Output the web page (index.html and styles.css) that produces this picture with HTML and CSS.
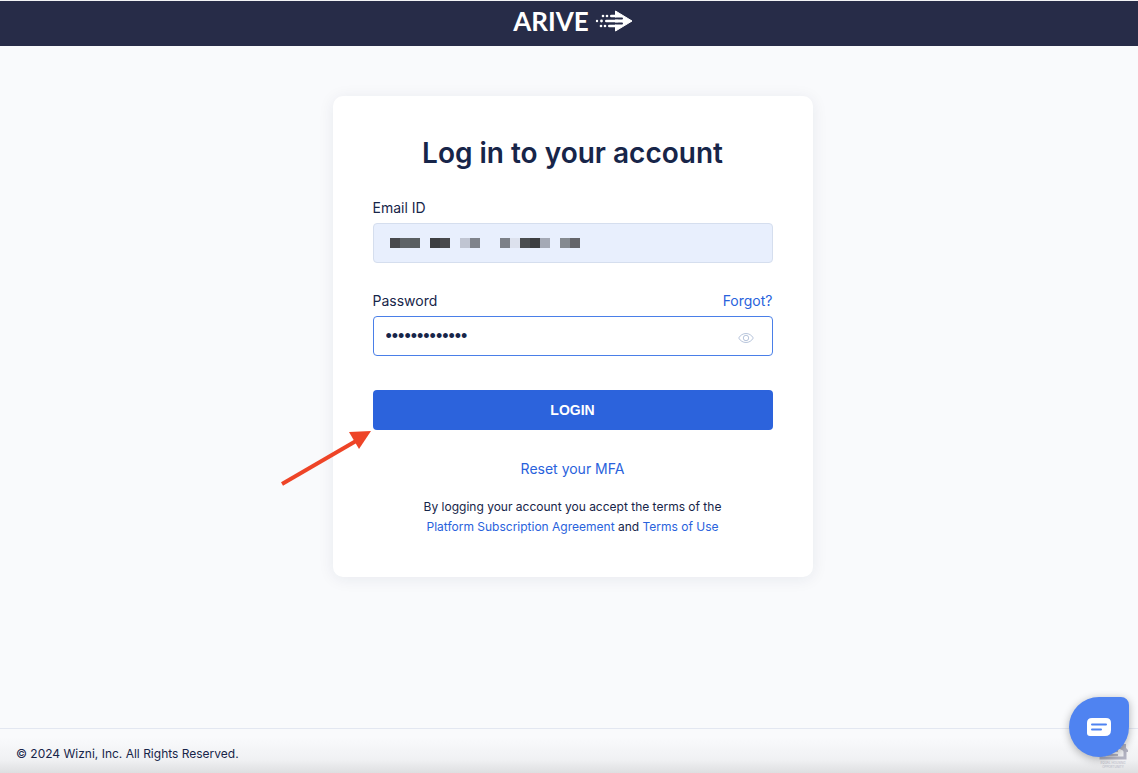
FILE: index.html
```html
<!DOCTYPE html>
<html lang="en">
<head>
    <meta charset="UTF-8">
    <meta name="viewport" content="width=device-width, initial-scale=1.0">
    <title>Arive - Log in</title>
    <link rel="stylesheet" href="styles.css">
</head>
<body>
    <header class="header">
        <div class="logo">
            <span class="logo-text">ARIVE</span>
            <svg class="logo-arrow" viewBox="0 0 38 24" width="38" height="24" aria-hidden="true">
                <path fill="#fff" stroke="#fff" stroke-linejoin="round" d="M20.5 2 L37 12 L20.5 22 Z"/>
                <path d="M19 9.5 H27 M19 14.5 H27" stroke="#272c48" stroke-width="2" stroke-linecap="round"/>
                <g fill="#fff">
                    <circle cx="8" cy="7" r="1.3"/>
                    <circle cx="12" cy="7" r="1.3"/>
                    <rect x="15" y="5.7" width="7" height="2.6" rx="1.3"/>
                    <circle cx="2" cy="12" r="1.2"/>
                    <circle cx="6.5" cy="12" r="1.4"/>
                    <rect x="10" y="10.7" width="14" height="2.6" rx="1.3"/>
                    <circle cx="6" cy="17" r="1.3"/>
                    <circle cx="10" cy="17" r="1.3"/>
                    <rect x="13" y="15.7" width="9" height="2.6" rx="1.3"/>
                </g>
            </svg>
        </div>
    </header>

    <main class="main">
        <form class="card" id="login" action="#">
            <h1 class="title">Log in to your account</h1>
            <div class="field">
                <div class="field-head">
                    <label for="email">Email ID</label>
                </div>
                <div class="control">
                    <input class="input filled" type="email" id="email">
                    <svg class="mask" width="190" height="10" aria-hidden="true">
                        <rect x="0" width="10" height="10" fill="#48494d"/>
                        <rect x="10" width="10" height="10" fill="#5f6468"/>
                        <rect x="20" width="10" height="10" fill="#595e61"/>
                        <rect x="40" width="10" height="10" fill="#3d3f42"/>
                        <rect x="50" width="10" height="10" fill="#48494d"/>
                        <rect x="70" width="10" height="10" fill="#c0c5d2"/>
                        <rect x="80" width="10" height="10" fill="#7f838b"/>
                        <rect x="110" width="10" height="10" fill="#7c8088"/>
                        <rect x="120" width="10" height="10" fill="#dce1ed"/>
                        <rect x="130" width="10" height="10" fill="#4b4e51"/>
                        <rect x="140" width="10" height="10" fill="#3c3e41"/>
                        <rect x="150" width="10" height="10" fill="#a4a9b5"/>
                        <rect x="170" width="10" height="10" fill="#858a90"/>
                        <rect x="180" width="10" height="10" fill="#64656a"/>
                    </svg>
                </div>
            </div>
            <div class="field">
                <div class="field-head">
                    <label for="password">Password</label>
                    <a href="#">Forgot?</a>
                </div>
                <div class="control">
                    <input class="input active" type="password" id="password" value="abcdefghijklm">
                    <button class="eye" type="button" aria-label="Show password">
                        <svg viewBox="0 0 16 12" width="16" height="12" fill="none" stroke="#b9c6dc">
                            <path d="M.7 6 C4 0 12 0 15.3 6 C12 12 4 12 .7 6 Z"/>
                            <circle cx="8" cy="6" r="2.7"/>
                        </svg>
                    </button>
                </div>
            </div>
            <button class="login" type="submit">LOGIN</button>
            <!-- pointer to the login button -->
            <svg class="pointer" viewBox="0 0 92 56" width="92" height="56" aria-hidden="true">
                <path d="M2 54 L76 11" stroke="#ee4427" stroke-width="4"/>
                <path d="M91 1 L69 2 L79 19 Z" fill="#ee4427"/>
            </svg>
            <a class="reset" href="#">Reset your MFA</a>
            <p class="terms">
                By logging your account you accept the terms of the<br>
                <a href="#">Platform Subscription Agreement</a> and <a href="#">Terms of Use</a>
            </p>
        </form>
    </main>

    <footer class="footer">
        <p>© 2024 Wizni, Inc. All Rights Reserved.</p>
        <svg class="housing" viewBox="0 0 30 26" width="30" height="26" role="img" aria-label="Equal Housing Opportunity">
            <path d="M3 6 L15 0 L27 6 V14 H3 Z" fill="none" stroke="#b3b4c3" stroke-width="3"/>
            <path d="M24 4 V0 H28 V4 L30 6 V8 H26" fill="#b3b4c3"/>
            <path d="M9 7 H20 M9 11 H20" stroke="#b3b4c3" stroke-width="2"/>
            <text x="15" y="20" text-anchor="middle">EQUAL HOUSING</text>
            <text x="15" y="24" text-anchor="middle">OPPORTUNITY</text>
        </svg>
    </footer>

    <button class="chat" type="button" aria-label="Open chat">
        <svg viewBox="0 0 24 18" width="24" height="18">
            <path fill="#fff" d="M5 0 H19 Q24 0 24 5 V12 Q24 18 18 18 H3 Q0 18 0 15 V5 Q0 0 5 0 Z"/>
            <path d="M5 6.5 H19 M5 11.5 H14" stroke="#4f83f1" stroke-width="2" stroke-linecap="round"/>
        </svg>
    </button>
</body>
</html>
```
FILE: styles.css
```css
* {
    box-sizing: border-box;
}

body {
    display: flex;
    flex-direction: column;
    min-height: 100vh;
    margin: 0;
    background-color: #f9fafc;
    color: #172549;
    font-family: Inter, "Liberation Sans", sans-serif;
    font-size: 14px;
    line-height: 20px;
}

a {
    color: #2962dc;
    text-decoration: none;
}

.header {
    display: flex;
    justify-content: center;
    height: 46px;
    padding-left: 8px;
    padding-bottom: 6px;
    background-color: #272c48;
    border-top: 1px solid #f3f4f6;
}

.logo {
    display: flex;
    align-items: center;
    gap: 6px;
}

.logo-text {
    color: #fff;
    font-family: Lato, sans-serif;
    font-size: 26px;
    font-weight: 700;
}

.main {
    flex: 1;
    padding: 50px 0 50px 7px;
}

.card {
    position: relative;
    width: 100%;
    max-width: 480px;
    margin: 0 auto;
    padding: 40px;
    background-color: #fff;
    border-radius: 10px;
    box-shadow: 0 2px 16px rgba(23, 37, 73, 0.08);
}

.title {
    margin: 0 0 28px;
    font-size: 28px;
    font-weight: 600;
    line-height: 34px;
    text-align: center;
}

.field {
    margin-bottom: 28px;
}

.field-head {
    display: flex;
    justify-content: space-between;
    margin-bottom: 5px;
}

.control {
    position: relative;
}

.input {
    display: block;
    width: 100%;
    height: 40px;
    padding: 0 50px 0 12px;
    border: 1px solid #d5deee;
    border-radius: 4px;
    outline: none;
    background-color: #fff;
    color: #172549;
    font-family: inherit;
    font-size: 14px;
}

.input.filled {
    background-color: #e8effd;
}

.input.active {
    border-color: #4a7fe8;
    font-family: "Liberation Sans", Arial, sans-serif;
    font-size: 18px;
}

.mask {
    position: absolute;
    top: 15px;
    left: 17px;
}

.eye {
    position: absolute;
    top: 16px;
    right: 19px;
    display: flex;
    padding: 0;
    border: 0;
    background: none;
}

.login {
    display: block;
    width: 100%;
    height: 40px;
    margin-top: 34px;
    border: 0;
    border-radius: 4px;
    background-color: #2c63dc;
    color: #fff;
    font-family: "Liberation Sans", Arial, sans-serif;
    font-size: 14px;
    font-weight: 700;
}

.pointer {
    position: absolute;
    top: 334px;
    left: -53px;
}

.reset {
    display: block;
    margin-top: 29px;
    text-align: center;
}

.terms {
    margin: 18px 0 0;
    font-size: 12px;
    text-align: center;
}

.footer {
    display: flex;
    justify-content: space-between;
    height: 45px;
    padding: 15px 10px 0 16px;
    border-top: 1px solid #e3e7f1;
    background: linear-gradient(#f9fafc 20%, #f0f1f3 70%, #dedfe1);
    font-size: 12px;
}

.footer p {
    margin: 0;
}

.housing {
    flex: none;
}

.housing text {
    fill: #b3b4c3;
    font-size: 3px;
}

.chat {
    position: fixed;
    right: 9px;
    bottom: 16px;
    display: flex;
    align-items: center;
    justify-content: center;
    width: 60px;
    height: 60px;
    border: 0;
    border-radius: 30px 8px 30px 30px;
    background-color: #4f83f1;
    box-shadow: 0 2px 8px rgba(0, 0, 0, 0.3);
}
```
